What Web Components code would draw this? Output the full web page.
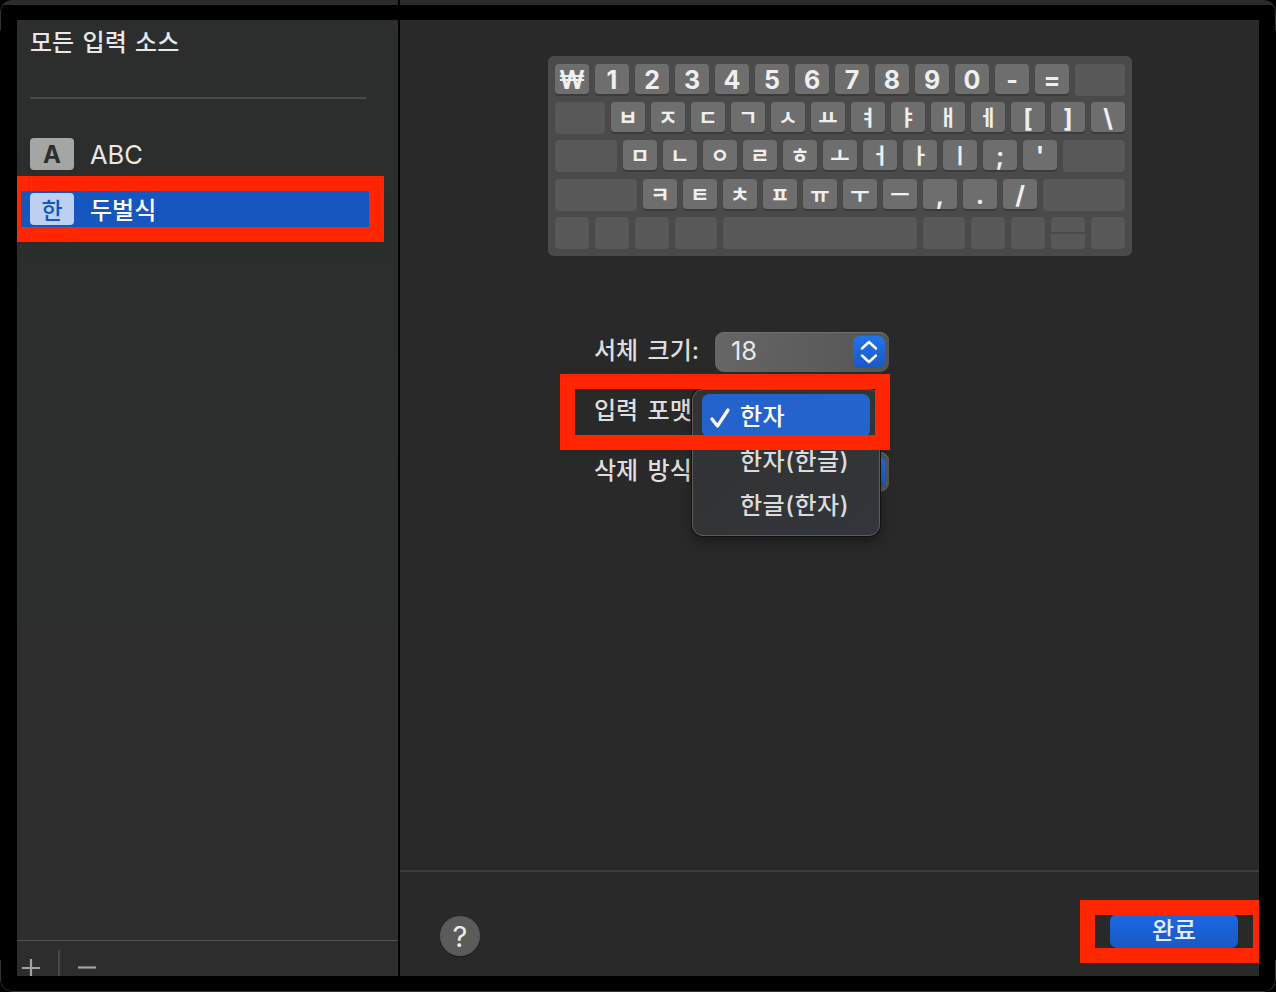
<!DOCTYPE html>
<html lang="ko"><head><meta charset="utf-8"><title>입력 소스</title>
<style>
html,body{margin:0;padding:0;background:#000;}
body{font-family:Inter,"Noto Sans CJK KR",sans-serif;color:#e6e6e6;}
</style></head>
<body>
<app-shell>
  <source-sidebar slot="side">
    <source-row badge="A" label="ABC"></source-row>
    <source-row badge="한" label="두벌식" selected></source-row>
  </source-sidebar>
  <settings-pane slot="main">
    <key-board></key-board>
    <setting-form>
      <form-label>서체 크기:</form-label><pop-select value="18"></pop-select>
      <form-label>입력 포맷:</form-label><pop-select value=""><drop-menu></drop-menu></pop-select>
      <form-label>삭제 방식:</form-label><pop-select value=""></pop-select>
    </setting-form>
  </settings-pane>
  <red-mark slot="marks" style="left:17px;top:176px;width:367px;height:66px;border-width:15px 15px 15px 4px"></red-mark>
  <red-mark slot="marks" style="left:560px;top:374px;width:330px;height:76px;border-width:15px"></red-mark>
  <red-mark slot="marks" style="left:1080px;top:900px;width:179px;height:63px;border-width:15px 6px 15px 15px"></red-mark>
</app-shell>
<script>
const def=(n,html,init)=>customElements.define(n,class extends HTMLElement{
  connectedCallback(){ if(this.shadowRoot) return; const r=this.attachShadow({mode:'open'}); r.innerHTML=typeof html==='function'?html(this):html; init&&init(r,this);}
});
def('app-shell',`<style>
:host{display:block;position:relative;width:1276px;height:992px;background:#000;overflow:hidden;border-radius:12px}
.top{display:flex;height:5px;margin:0 0 15px 0}
.top i{display:block;background:#2b2d2c;width:398px}.top b{display:block;background:#2a2a2a;flex:1;margin-left:2px}
.win{display:flex;margin-left:17px;width:1242px;height:956px;overflow:hidden}
.split{width:2px;background:#000;flex:none}
.frame{position:absolute;inset:0;border:1px solid #333;border-top-color:transparent;border-radius:12px;pointer-events:none;
  -webkit-mask:linear-gradient(#000,#000 30px,transparent 30px,transparent 960px,#000 960px)}
</style><div class="top"><i></i><b></b></div>
<div class="win"><slot name="side"></slot><div class="split"></div><slot name="main"></slot></div>
<div class="frame"></div><slot name="marks"></slot>`);
def('source-sidebar',`<style>
:host{display:flex;flex-direction:column;width:381px;flex:none;height:956px;background:linear-gradient(#2b2e2d,#2d2d2d 70%);}
.t{font-size:24px;line-height:44px;height:44px;padding-left:13px;color:#e8e8e8;font-weight:500;word-spacing:2px}
.t span{display:block;padding-top:2px;line-height:42px}
hr{border:0;height:2px;background:#4a4b4a;margin:33px 0 37px 13px;width:336px}
.list{display:flex;flex-direction:column;gap:19px}
.sp{flex:1}
.foot{height:35px;border-top:1px solid #525252;overflow:hidden;flex:none}
svg{display:block}
</style><div class="t"><span>모든 입력 소스</span></div><hr>
<div class="list"><slot></slot></div><div class="sp"></div>
<div class="foot"><svg width="90" height="35" viewBox="0 0 90 35"><path d="M5 27H23M14 18V35" stroke="#a2a2a2" stroke-width="2.2" fill="none"/><path d="M42 9V35" stroke="#555" stroke-width="1.4"/><path d="M61 26.5H79" stroke="#a2a2a2" stroke-width="2.2"/></svg></div>`);
def('source-row',h=>`<style>
:host{display:flex;align-items:center;height:36px;width:367px;padding-left:13px;box-sizing:border-box;gap:16px;font-size:25.5px;color:#e8e8e8}
:host([selected]){background:#1656bf;color:#fff;font-size:24px;font-weight:500}
.b{width:44px;height:32px;border-radius:4px;background:#a4a6a4;color:#2e2e2e;font-weight:700;font-size:24px;display:flex;align-items:center;justify-content:center;line-height:32px}
.b i{font-style:normal;padding-top:1px}
.l{padding-top:0}
:host([selected]) .l{padding:0 0 2px}
:host([selected]) .b{background:#bdd0ef;color:#1656bf;font-weight:500;font-size:23px}
:host([selected]) .b i{padding:3px 0 0}
</style><span class="b"><i>${h.getAttribute('badge')}</i></span><span class="l">${h.getAttribute('label')}</span>`);
def('settings-pane',`<style>
:host{display:flex;flex-direction:column;flex:1;height:956px;background:#292929;min-width:0}
.foot{margin-top:auto;border-top:2px solid #3d3d3d;display:flex;justify-content:space-between;align-items:flex-start;padding:42px 21px 0 40px;flex:none;height:62px}
.help{width:40px;height:40px;margin-top:2px;border-radius:50%;background:#5b5b5b;color:#ebebeb;font-size:29px;font-weight:400;display:flex;align-items:center;justify-content:center;box-shadow:0 1px 1px #1c1c1c}
.done{width:128px;height:34px;box-sizing:border-box;padding-bottom:6px;border-radius:7px;background:linear-gradient(#1b68e4,#1a59c4);color:#e6eefb;font-size:24px;font-weight:500;display:flex;align-items:center;justify-content:center}
</style><slot></slot><div class="foot"><div class="help">?</div><div class="done">완료</div></div>`);
def('key-board',`<style>
:host{display:flex;flex-direction:column;width:584px;height:200px;box-sizing:border-box;margin:36px 0 0 148px;padding:8px 7px;background:#4a4a4a;border-radius:6px;flex:none}
.r{display:flex;gap:6px;height:32px;margin-bottom:6px}
.r.x{margin-bottom:7px}
.k{width:34px;height:30px;box-sizing:border-box;padding-top:3px;border-radius:4px;background:#6e6e6e;box-shadow:0 2px 0 #3b3b3b;color:#efefef;font-weight:700;display:flex;align-items:center;justify-content:center;font-size:25px;line-height:27px;flex:none}
.k.j{font-size:21px;padding-top:1px;line-height:29px}
.d{height:32px;border-radius:4px;background:#585858;flex:none}
.s{display:flex;flex-direction:column;gap:2px;width:34px;flex:none}
.s .d{height:15px;border-radius:4px 4px 0 0}.s .d+.d{border-radius:0 0 4px 4px}
</style><div id="kb"></div>`,r=>{
  const rows=[[...'₩1234567890-='],[...'ㅂㅈㄷㄱㅅㅛㅕㅑㅐㅔ[]\\'],[...'ㅁㄴㅇㄹㅎㅗㅓㅏㅣ;\''],[...'ㅋㅌㅊㅍㅠㅜㅡ,./']];
  const kb=r.getElementById('kb');
  const key=c=>`<div class="k${/[ㄱ-ㅣ]/.test(c)?' j':''}">${c}</div>`;
  const dim=w=>`<div class="d" style="width:${w}px"></div>`;
  kb.innerHTML=
   `<div class="r">${rows[0].map(key).join('')}${dim(50)}</div>`+
   `<div class="r">${dim(50)}${rows[1].map(key).join('')}</div>`+
   `<div class="r x">${dim(62)}${rows[2].map(key).join('')}${dim(62)}</div>`+
   `<div class="r">${dim(82)}${rows[3].map(key).join('')}${dim(82)}</div>`+
   `<div class="r">${[34,34,34,42,194,42,34,34].map(dim).join('')}<div class="s">${dim(34)}${dim(34)}</div>${dim(34)}</div>`;
});
def('setting-form',`<style>
:host{display:grid;grid-template-columns:121px 174px;grid-auto-rows:40px;row-gap:20px;margin:76px 0 0 194px;align-items:center;flex:none;width:295px}
</style><slot></slot>`);
def('form-label',`<style>:host{display:block;font-size:24px;font-weight:500;color:#dedede;white-space:nowrap;word-spacing:3px;padding-bottom:7px}</style><slot></slot>`);
def('pop-select',h=>`<style>
:host{display:block;position:relative;height:40px;border-radius:9px;background:linear-gradient(100deg,#666,#555);box-shadow:inset 0 1px 0 #6e6e6e}
.v{font-size:25.5px;line-height:38px;padding-left:16px;color:#e8e8e8}
.st{position:absolute;right:4px;top:4px;width:32px;height:32px;border-radius:7px;background:linear-gradient(#2374e8,#1a58c4);display:flex;align-items:center;justify-content:center}
</style><div class="v">${h.getAttribute('value')}</div>
<div class="st"><svg width="20" height="26" viewBox="0 0 20 26" fill="none" stroke="#fff" stroke-width="2.5" stroke-linecap="round" stroke-linejoin="round"><path d="M3 9.5 10 3 17 9.5M3 16.5 10 23 17 16.5"/></svg></div><slot></slot>`);
def('drop-menu',`<style>
:host{display:block;position:absolute;left:-23px;top:-3px;width:188px;height:147px;box-sizing:border-box;padding:4px 0 0;border-radius:11px;background:linear-gradient(135deg,#323232,#33363a);border:1px solid #5c5c5c;box-shadow:0 0 0 1px #111,0 6px 12px rgba(0,0,0,.35);z-index:5}
.i{height:44.5px;line-height:46px;font-size:24px;font-weight:500;letter-spacing:.5px;padding-left:47px;color:#dcdcdc;position:relative;white-space:nowrap}
.i.on{margin:0 9px;padding-left:38px;background:#2563cc;border-radius:7px;color:#fff;height:43px;margin-bottom:1.5px}
svg{position:absolute;left:8px;top:14px}
</style><div class="i on"><svg width="20" height="20" viewBox="0 0 20 20" fill="none" stroke="#fff" stroke-width="3.2" stroke-linecap="round" stroke-linejoin="round"><path d="M2 11 7.5 18 18 2"/></svg>한자</div><div class="i">한자(한글)</div><div class="i">한글(한자)</div>`);
def('red-mark',`<style>:host{display:block;position:absolute;box-sizing:border-box;border:15px solid #ff2600;z-index:20;pointer-events:none}</style>`);
</script>
</body></html>
